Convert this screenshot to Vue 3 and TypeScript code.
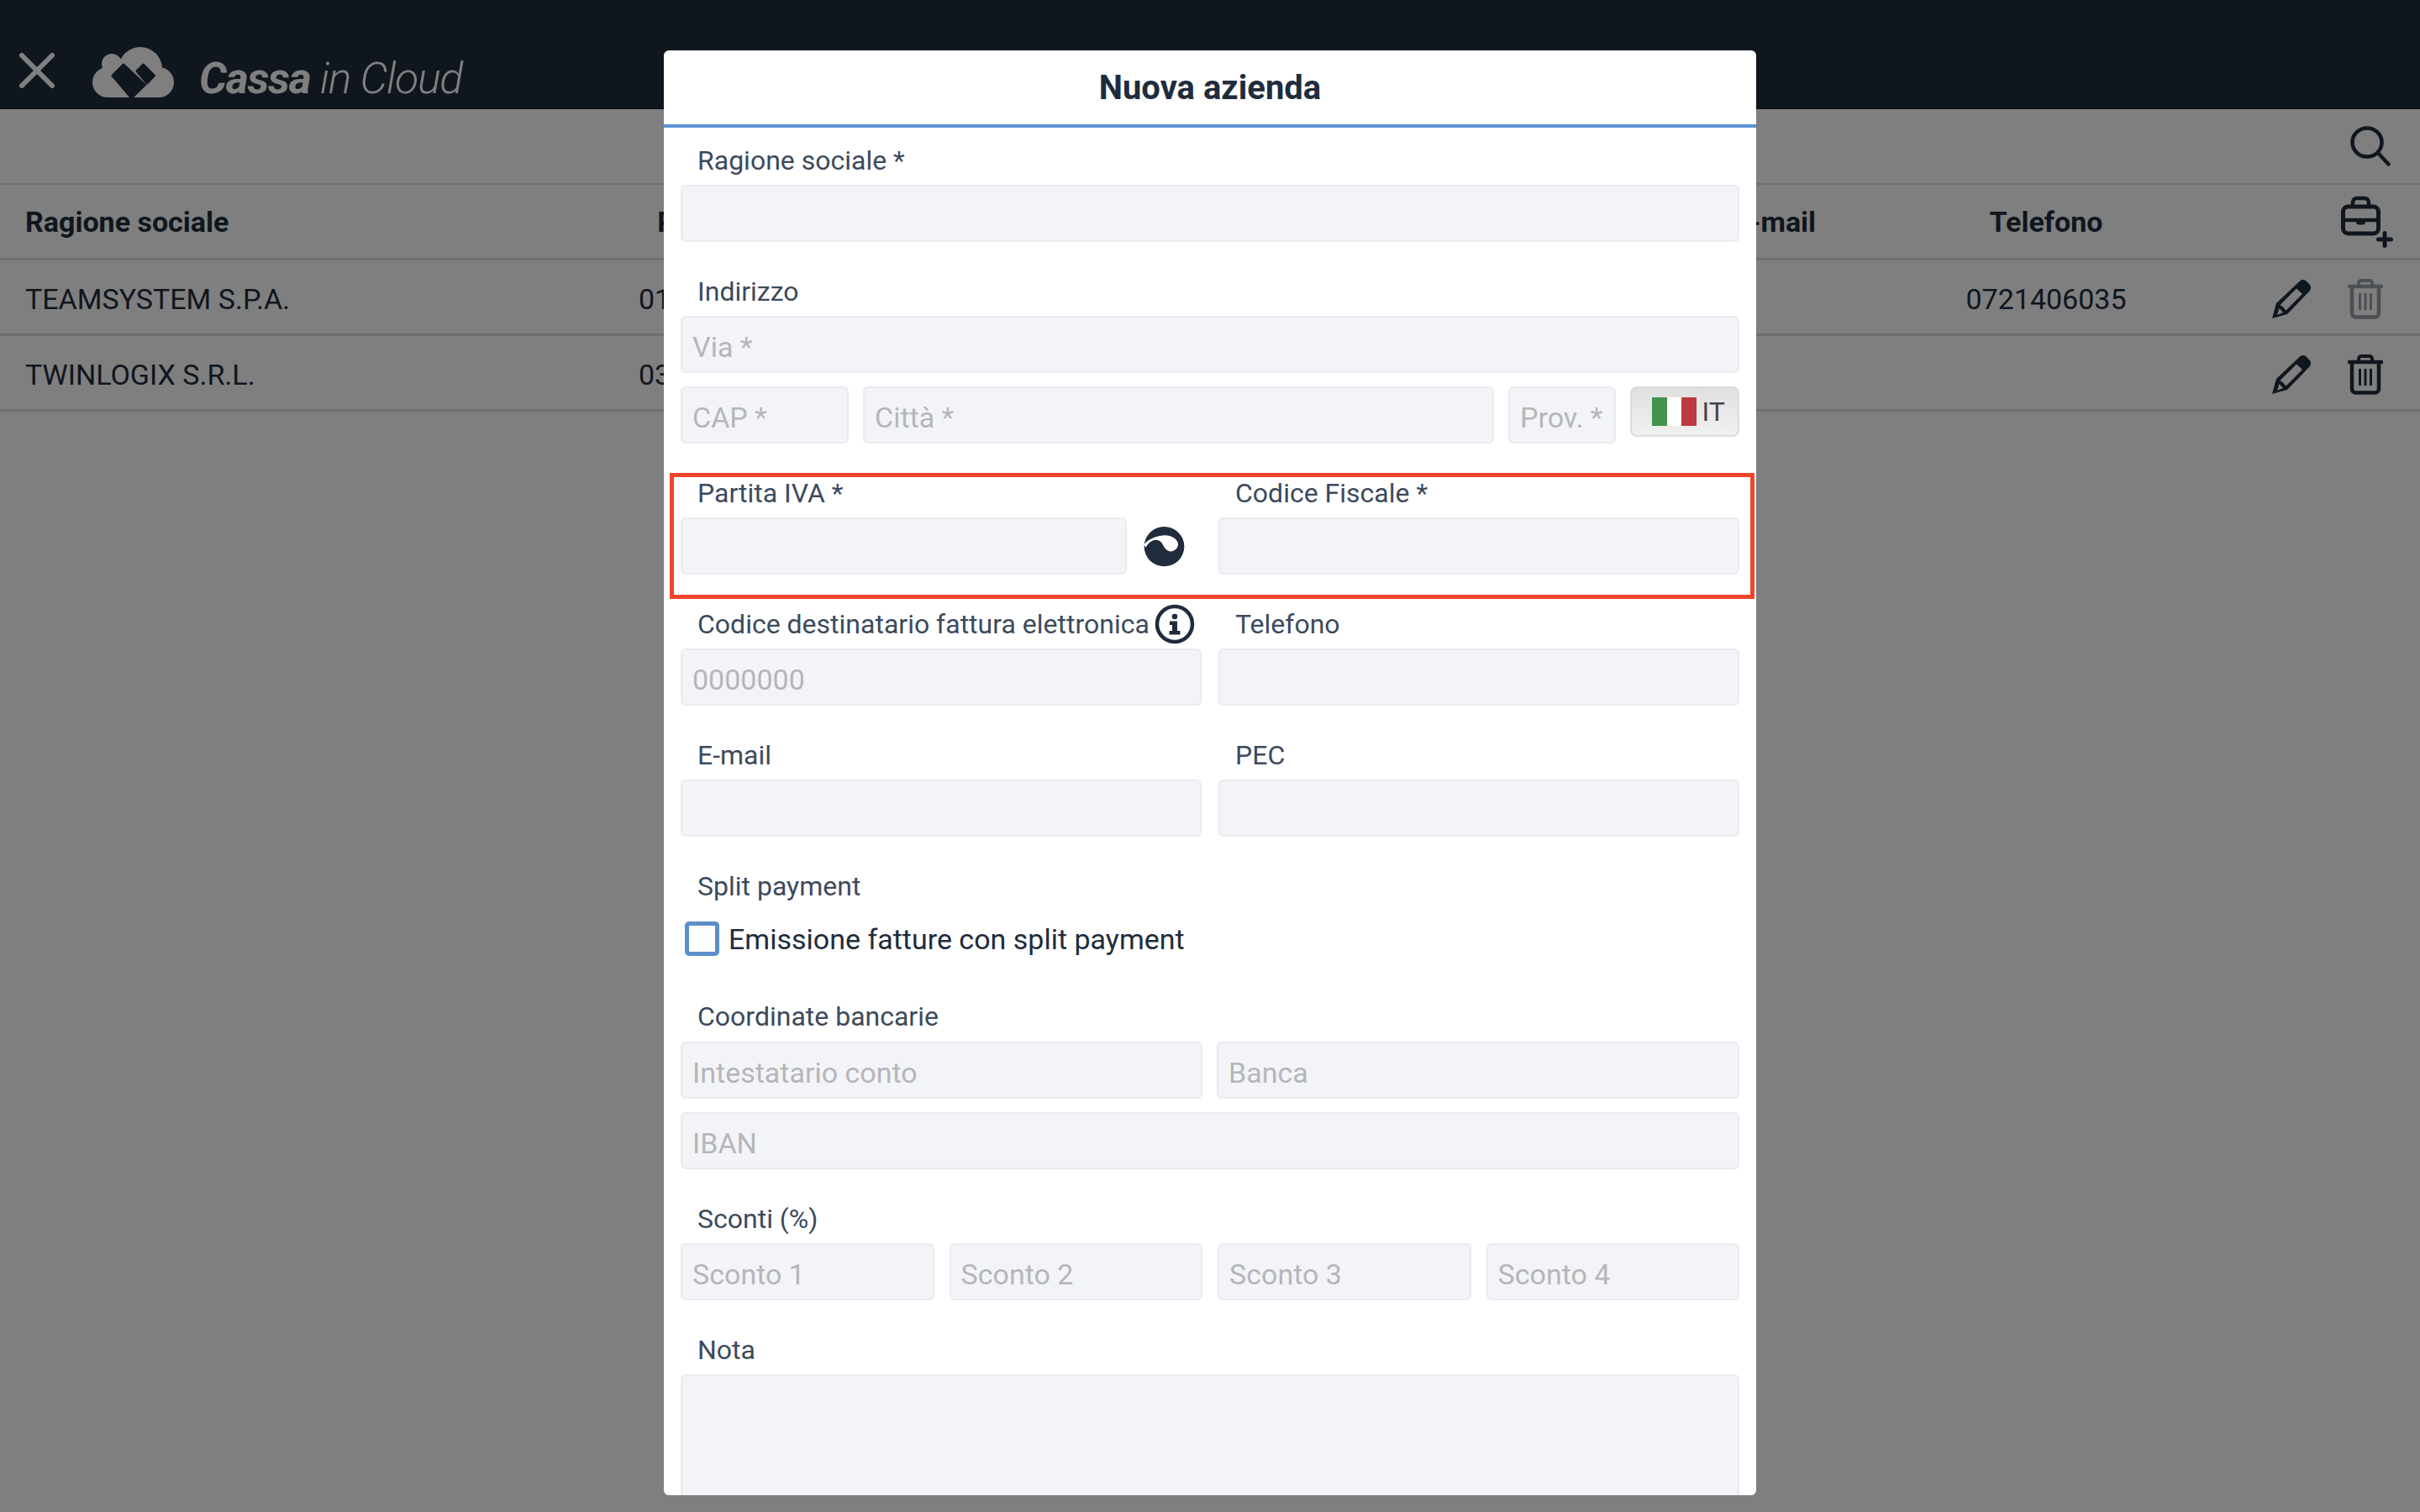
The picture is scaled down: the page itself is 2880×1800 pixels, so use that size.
<template>
  <div class="page">
    <!-- barra superiore -->
    <header class="topbar">
      <svg class="close" width="42" height="42" viewBox="0 0 42 42">
        <path d="M3 3 L39 39 M39 3 L3 39" stroke="#fff" stroke-width="6" stroke-linecap="round" fill="none" />
      </svg>
      <svg class="cloud" width="97" height="60" viewBox="0 0 97 60">
        <circle cx="18" cy="42" r="18" fill="#fff" />
        <circle cx="23" cy="20" r="12" fill="#fff" />
        <circle cx="57" cy="26" r="26" fill="#fff" />
        <circle cx="79" cy="42" r="18" fill="#fff" />
        <rect x="18" y="30" width="62" height="30" fill="#fff" />
        <path d="M24 34 L37 21 L62.5 45 L47 60 L46 60 Z" fill="#202c3c" stroke="#202c3c" stroke-width="3" stroke-linejoin="round" />
        <path d="M53 28.5 L60.5 21 L73.5 34 L65 43 Z" fill="#202c3c" stroke="#202c3c" stroke-width="3" stroke-linejoin="round" />
      </svg>
      <div class="brand"><b>Cassa</b> <span>in Cloud</span></div>
    </header>

    <!-- barra di ricerca -->
    <div class="toolbar">
      <svg width="48" height="48" viewBox="0 0 48 48">
        <ellipse cx="20" cy="19.5" rx="17.5" ry="17" fill="none" stroke="#202c3c" stroke-width="4.5" />
        <path d="M33 32 L45.5 45.5" stroke="#202c3c" stroke-width="4.5" stroke-linecap="round" />
      </svg>
    </div>

    <!-- tabella aziende -->
    <div class="row head">
      <div>Ragione sociale</div>
      <div class="center">Partita IVA</div>
      <div class="center">Indirizzo</div>
      <div class="center">E-mail</div>
      <div class="center">Telefono</div>
      <div class="actions add">
        <svg width="64" height="62" viewBox="0 0 64 62" fill="none" stroke="#202c3c">
          <rect x="2.5" y="13" width="42" height="32" rx="6" stroke-width="5" />
          <path d="M14 12 V8 a5 5 0 0 1 5-5 h9 a5 5 0 0 1 5 5 v4" stroke-width="4.5" />
          <path d="M3 29 H45" stroke-width="4.5" />
          <path d="M18 29 h11 v2 a3.5 3.5 0 0 1-3.5 3.5 h-4 a3.5 3.5 0 0 1-3.5-3.5 z" fill="#202c3c" stroke="none" />
          <path d="M52 44.5 V59.5 M44.5 52 H59.5" stroke-width="5" stroke-linecap="round" />
        </svg>
      </div>
    </div>
    <div v-for="a in aziende" :key="a.nome" class="row">
      <div>{{ a.nome }}</div>
      <div class="center">{{ a.piva }}</div>
      <div class="center"></div>
      <div class="center"></div>
      <div class="center">{{ a.telefono }}</div>
      <div class="actions">
        <svg width="48" height="48" viewBox="0 0 48 48">
          <path fill="#202c3c" fill-rule="evenodd" d="M1 47 L6 29 L34 2.5 Q37.5 0 41 2 L46 7 Q48 10.5 46 14 L19 42 Z M10.5 31 L30 11.5 L37 18 L17.5 37.5 L14 33.5 Z M7 43 L9.5 35 L14 40 Z" />
        </svg>
        <svg :class="{ disabled: a.bloccata }" width="42" height="48" viewBox="0 0 42 48" fill="none" stroke="#202c3c">
          <path d="M2 9 H40" stroke-width="4.5" stroke-linecap="round" />
          <path d="M13 8 V5 a3 3 0 0 1 3-3 h10 a3 3 0 0 1 3 3 v3" stroke-width="4" />
          <path d="M5 10 V41 a4.5 4.5 0 0 0 4.5 4.5 h23 a4.5 4.5 0 0 0 4.5-4.5 V10" stroke-width="4.5" />
          <path d="M14.5 17 V37 M21 17 V37 M27.5 17 V37" stroke-width="3" />
        </svg>
      </div>
    </div>

    <div class="overlay"></div>

    <!-- modale nuova azienda -->
    <div class="modal">
      <div class="modal-title">Nuova azienda</div>
      <div class="modal-body">
        <div class="group">
          <label>Ragione sociale *</label>
          <input />
        </div>

        <div class="group">
          <label>Indirizzo</label>
          <input placeholder="Via *" />
          <div class="address">
            <input class="cap" placeholder="CAP *" />
            <input class="grow" placeholder="Città *" />
            <input class="prov" placeholder="Prov. *" />
            <button class="nation">
              <span class="flag"><i class="g"></i><i class="w"></i><i class="r"></i></span>IT
            </button>
          </div>
        </div>

        <div class="group two highlight-row">
          <div>
            <label>Partita IVA *</label>
            <div class="vat">
              <input class="grow" />
              <span class="vat-logo">
                <svg width="53" height="51" viewBox="30 28 160 152">
                  <ellipse cx="110" cy="104.5" rx="72" ry="71.5" fill="#202c3c" />
                  <path fill="#fff" d="M37 98 C50 80 78 66 110 64 C135 63 158 76 160 96 C160 112 146 122 134 122 C118 122 110 108 104 96 C98 84 88 80 76 81 C62 83 52 92 44 108 Z" />
                </svg>
              </span>
            </div>
          </div>
          <div>
            <label>Codice Fiscale *</label>
            <input />
          </div>
          <div class="highlight"></div>
        </div>

        <div class="group two">
          <div>
            <label>
              Codice destinatario fattura elettronica
              <svg class="info" width="48" height="48" viewBox="0 0 48 48">
                <circle cx="24" cy="24" r="21" fill="none" stroke="#202c3c" stroke-width="4.5" />
                <circle cx="24" cy="15" r="3.3" fill="#202c3c" />
                <path fill="#202c3c" d="M18 20.5 h9 v11.5 h3.5 v4.5 h-13 v-4.5 h3.5 v-7 h-3 z" />
              </svg>
            </label>
            <input placeholder="0000000" />
          </div>
          <div>
            <label>Telefono</label>
            <input />
          </div>
        </div>

        <div class="group two">
          <div>
            <label>E-mail</label>
            <input />
          </div>
          <div>
            <label>PEC</label>
            <input />
          </div>
        </div>

        <div class="group">
          <label>Split payment</label>
          <div class="check">
            <span class="box"></span>
            <span>Emissione fatture con split payment</span>
          </div>
        </div>

        <div class="group">
          <label class="bank-label">Coordinate bancarie</label>
          <div class="bank">
            <input placeholder="Intestatario conto" />
            <input placeholder="Banca" />
          </div>
          <input class="iban" placeholder="IBAN" />
        </div>

        <div class="group">
          <label>Sconti (%)</label>
          <div class="discounts">
            <input v-for="n in 4" :key="n" :placeholder="`Sconto ${n}`" />
          </div>
        </div>

        <div class="group">
          <label>Nota</label>
          <textarea></textarea>
        </div>
      </div>
    </div>
  </div>
</template>

<script setup lang="ts">
interface Azienda {
  nome: string
  piva: string
  telefono: string
  bloccata: boolean
}

const aziende: Azienda[] = [
  { nome: 'TEAMSYSTEM S.P.A.', piva: '01035310414', telefono: '0721406035', bloccata: true },
  { nome: 'TWINLOGIX S.R.L.', piva: '03609720988', telefono: '', bloccata: false },
]
</script>

<style>
html,
body {
  margin: 0;
  overflow: hidden;
  background: #fff;
}
</style>

<style scoped>
.page {
  position: relative;
  width: 2880px;
  height: 1800px;
  overflow: hidden;
  background: #fff;
  color: #202c3c;
  font-family: Roboto, "Liberation Sans", sans-serif;
}

/* barra superiore */
.topbar {
  display: flex;
  align-items: flex-start;
  height: 130px;
  padding-left: 23px;
  box-sizing: border-box;
  background: #202c3c;
}
.close {
  margin-top: 63px;
}
.cloud {
  margin: 56px 0 0 45px;
}
.brand {
  margin: 62px 0 0 30px;
  color: #fff;
  font-size: 52px;
  letter-spacing: -1.3px;
  line-height: 64px;
  font-style: italic;
  white-space: nowrap;
}
.brand span {
  font-weight: 300;
}

/* tabella */
.toolbar {
  display: flex;
  justify-content: flex-end;
  align-items: flex-start;
  height: 90px;
  padding: 20px 35px 0 0;
  box-sizing: border-box;
  border-bottom: 2px solid #dcdce6;
}
.row {
  display: grid;
  grid-template-columns: 620px 430px 850px 364px 282px 304px;
  align-items: center;
  height: 90px;
  padding-left: 30px;
  box-sizing: border-box;
  border-bottom: 3px solid #dcdce6;
  font-size: 34px;
}
.row > div:not(.actions) {
  padding-top: 5px;
}
.head > div:not(.actions) {
  padding-top: 0;
}
.head {
  font-weight: 700;
}
.center {
  text-align: center;
}
.actions {
  display: flex;
  justify-content: flex-end;
  align-items: center;
  gap: 43px;
  padding: 4px 44px 0 0;
}
.add {
  padding: 0 30px 0 0;
}
.disabled {
  opacity: 0.45;
}

.overlay {
  position: absolute;
  inset: 0;
  background: rgba(0, 0, 0, 0.5);
}

/* modale */
.modal {
  position: absolute;
  top: 60px;
  left: 790px;
  display: flex;
  flex-direction: column;
  width: 1300px;
  height: 1720px;
  overflow: hidden;
  border-radius: 6px;
  background: #fff;
}
.modal-title {
  flex: none;
  height: 92px;
  box-sizing: border-box;
  border-bottom: 4px solid #5b92d3;
  font-size: 40px;
  font-weight: 700;
  line-height: 90px;
  text-align: center;
}
.modal-body {
  padding: 19px 20px 0;
}
.group {
  margin-bottom: 39px;
}
label {
  display: flex;
  align-items: center;
  height: 40px;
  margin-bottom: 9px;
  padding-left: 20px;
  color: #3c4a5c;
  font-size: 32px;
  white-space: nowrap;
}
.info {
  flex: none;
  margin-left: 6px;
}
input,
textarea {
  display: block;
  width: 100%;
  height: 68px;
  padding: 6px 12px 0;
  box-sizing: border-box;
  border: 2px solid #e9ebf1;
  border-radius: 6px;
  outline: none;
  background: #f3f4f8;
  color: #202c3c;
  font-family: inherit;
  font-size: 34px;
}
textarea {
  height: 220px;
  resize: none;
}
input::placeholder {
  color: #b5b6ba;
  opacity: 1;
}
.grow {
  flex: 1;
  min-width: 0;
}
.address {
  display: flex;
  align-items: flex-start;
  gap: 17px;
  margin-top: 16px;
}
.cap {
  flex: none;
  width: 200px;
}
.prov {
  flex: none;
  width: 128px;
}
.nation {
  display: flex;
  flex: none;
  align-items: center;
  width: 130px;
  height: 60px;
  padding: 0 0 0 24px;
  box-sizing: border-box;
  border: 2px solid #dcdcdc;
  border-radius: 8px;
  background: linear-gradient(#e0e0e0, #f1f1f1);
  color: #444;
  font-family: inherit;
  font-size: 32px;
}
.flag {
  display: flex;
  height: 34px;
  margin-right: 7px;
}
.flag i {
  width: 17.5px;
}
.flag .g {
  background: #43934f;
}
.flag .w {
  background: #fff;
}
.flag .r {
  background: #bd3a3e;
}
.two {
  display: grid;
  grid-template-columns: 620px 620px;
  gap: 20px;
}
.highlight-row {
  position: relative;
}
.highlight {
  position: absolute;
  top: -4px;
  right: -18px;
  bottom: -29px;
  left: -13px;
  border: 5px solid #f0452a;
  pointer-events: none;
}
.vat {
  display: flex;
  align-items: center;
}
.vat-logo {
  display: flex;
  flex: none;
  justify-content: center;
  width: 89px;
}
.check {
  display: flex;
  align-items: center;
  gap: 11px;
  padding: 13px 0 13px 5px;
  font-size: 34px;
}
.box {
  width: 41px;
  height: 41px;
  box-sizing: border-box;
  border: 5px solid #5b8fc9;
  border-radius: 5px;
  background: #fff;
}
.bank-label {
  margin-bottom: 10px;
}
.bank {
  display: grid;
  grid-template-columns: 621px 622px;
  gap: 17px;
}
.iban {
  margin-top: 16px;
}
.discounts {
  display: grid;
  grid-template-columns: repeat(4, 1fr);
  gap: 18px;
}
</style>
